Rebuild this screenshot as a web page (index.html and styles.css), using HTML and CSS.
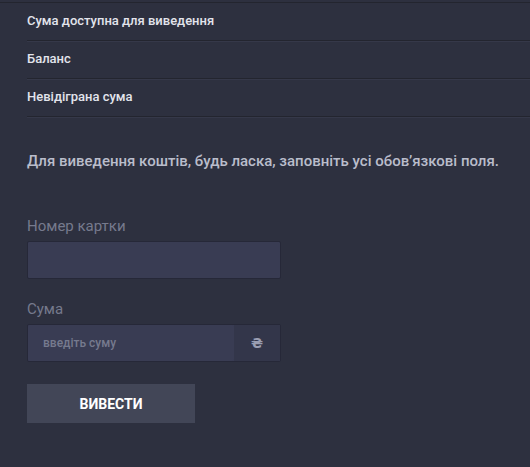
FILE: index.html
```html
<!DOCTYPE html>
<html lang="uk">
<head>
    <meta charset="UTF-8">
    <meta name="viewport" content="width=device-width, initial-scale=1.0">
    <title>Виведення коштів</title>
    <link rel="stylesheet" href="styles.css">
</head>
<body>
    <div class="top-line"></div>

    <div class="info-list">
        <div class="info-row">Сума доступна для виведення</div>
        <div class="info-row">Баланс</div>
        <div class="info-row">Невідіграна сума</div>
    </div>

    <form class="withdraw-form">
        <p class="note">Для виведення коштів, будь ласка, заповніть усі обов’язкові поля.</p>

        <div class="form-group">
            <label for="card">Номер картки</label>
            <input type="text" id="card" name="card">
        </div>

        <div class="form-group">
            <label for="amount">Сума</label>
            <div class="amount-field">
                <input type="text" id="amount" name="amount" placeholder="введіть суму">
                <span class="currency">₴</span>
            </div>
        </div>

        <button type="submit" class="submit-btn">ВИВЕСТИ</button>
    </form>
</body>
</html>
```

FILE: styles.css
```css
body {
    margin: 0;
    padding: 0;
    background: #2d303f;
    font-family: Roboto, "DejaVu Sans", sans-serif;
    color: #e4e6ee;
}

.top-line {
    height: 2px;
    background: #2d303f;
    border-bottom: 1px solid #23252f;
}

.info-list {
    margin-left: 27px;
}

.info-row {
    height: 37px;
    line-height: 35px;
    font-size: 13px;
    font-weight: 500;
    color: #e2e4ec;
    border-bottom: 1px solid #23252f;
    box-shadow: 0 1px 0 #353849;
}

.withdraw-form {
    padding: 0 27px;
}

.note {
    margin: 34px 0 0;
    font-size: 15px;
    line-height: 20px;
    color: #babdcb;
    font-weight: 500;
}

.form-group {
    margin-top: 46px;
}

.form-group + .form-group {
    margin-top: 21px;
}

label {
    display: block;
    font-size: 15px;
    line-height: 18px;
    color: #767a8d;
    margin-bottom: 6px;
}

input {
    box-sizing: border-box;
    width: 254px;
    height: 38px;
    padding: 0 15px;
    background: #393c53;
    border: 1px solid #262838;
    border-radius: 2px;
    color: #e4e6ee;
    font-family: inherit;
    font-size: 12px;
    outline: none;
}

.amount-field {
    display: flex;
    width: 254px;
    height: 38px;
    box-sizing: border-box;
    border: 1px solid #262838;
    border-radius: 2px;
    background: #393c53;
}

.amount-field input {
    flex: 1;
    width: auto;
    height: 36px;
    border: none;
    font-weight: 500;
}

.amount-field input::placeholder {
    color: #767a8e;
}

.currency {
    width: 46px;
    display: flex;
    align-items: center;
    justify-content: center;
    background: #33364a;
    color: #9a9eb2;
    font-size: 14px;
    font-weight: bold;
}

.submit-btn {
    display: block;
    margin-top: 22px;
    width: 168px;
    height: 39px;
    background: #424657;
    border: none;
    border-radius: 0;
    color: #ffffff;
    font-family: inherit;
    font-size: 14px;
    font-weight: bold;
    cursor: pointer;
}
```
